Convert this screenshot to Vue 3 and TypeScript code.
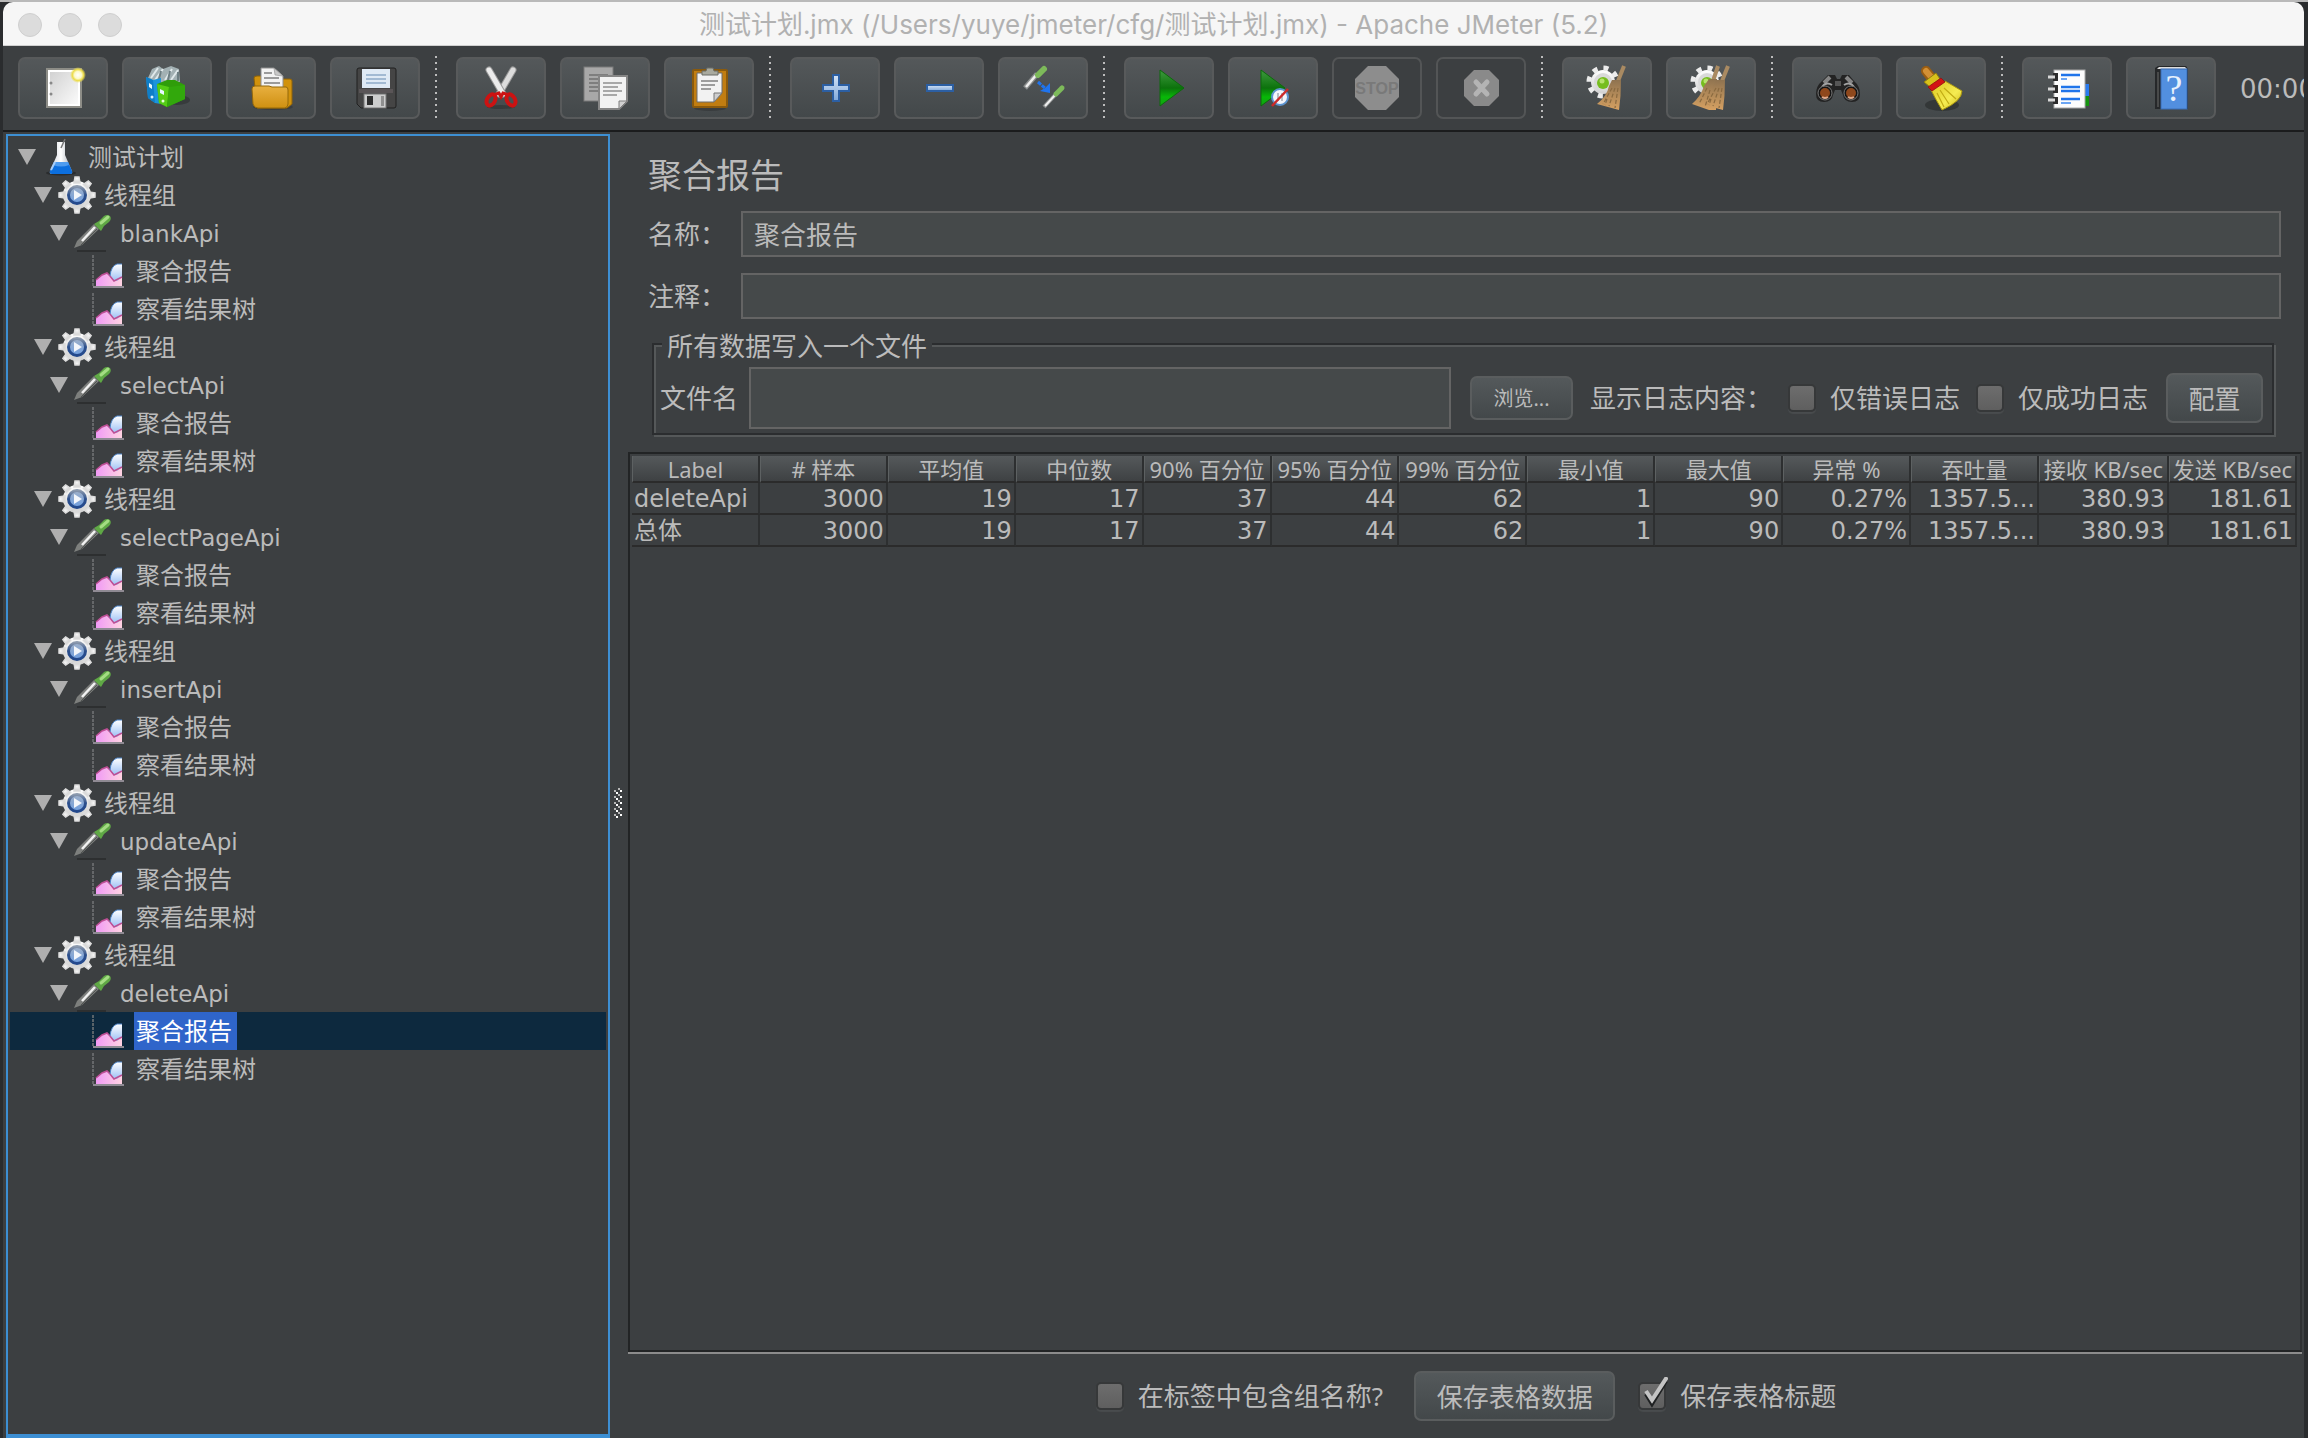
<script setup lang="ts">
import { ref } from 'vue'

type NodeKind = 'plan' | 'group' | 'sampler' | 'report'

interface TreeNode {
  id: number
  level: number
  kind: NodeKind
  label: string
}

interface ToolButton {
  icon: string
  label: string
  disabled?: boolean
}

const toolGroups: ToolButton[][] = [
  [
    { icon: 'new', label: '新建' },
    { icon: 'templates', label: '模板' },
    { icon: 'open', label: '打开' },
    { icon: 'save', label: '保存' },
  ],
  [
    { icon: 'cut', label: '剪切' },
    { icon: 'copy', label: '复制' },
    { icon: 'paste', label: '粘贴' },
  ],
  [
    { icon: 'plus', label: '全部展开' },
    { icon: 'minus', label: '全部折叠' },
    { icon: 'toggle', label: '切换' },
  ],
  [
    { icon: 'start', label: '启动' },
    { icon: 'start-now', label: '不停顿开始' },
    { icon: 'stop', label: '停止', disabled: true },
    { icon: 'shutdown', label: '关闭', disabled: true },
  ],
  [
    { icon: 'clear', label: '清除' },
    { icon: 'clear-all', label: '清除全部' },
  ],
  [
    { icon: 'search', label: '搜索' },
    { icon: 'reset', label: '重置搜索' },
  ],
  [
    { icon: 'functions', label: '函数助手' },
    { icon: 'help', label: '帮助' },
  ],
]

const apis = ['blankApi', 'selectApi', 'selectPageApi', 'insertApi', 'updateApi', 'deleteApi']

const nodes: TreeNode[] = [{ id: 0, level: 0, kind: 'plan', label: '测试计划' }]
for (const api of apis) {
  nodes.push({ id: nodes.length, level: 1, kind: 'group', label: '线程组' })
  nodes.push({ id: nodes.length, level: 2, kind: 'sampler', label: api })
  nodes.push({ id: nodes.length, level: 3, kind: 'report', label: '聚合报告' })
  nodes.push({ id: nodes.length, level: 3, kind: 'report', label: '察看结果树' })
}

const selectedId = ref(nodes.length - 2)
const elementName = ref('聚合报告')
const comment = ref('')
const fileName = ref('')
const errorsOnly = ref(false)
const successOnly = ref(false)
const includeGroup = ref(false)
const saveHeader = ref(true)

const columns = [
  'Label', '# 样本', '平均值', '中位数', '90% 百分位', '95% 百分位', '99% 百分位',
  '最小值', '最大值', '异常 %', '吞吐量', '接收 KB/sec', '发送 KB/sec',
]
const rows = [
  ['deleteApi', '3000', '19', '17', '37', '44', '62', '1', '90', '0.27%', '1357.5...', '380.93', '181.61'],
  ['总体', '3000', '19', '17', '37', '44', '62', '1', '90', '0.27%', '1357.5...', '380.93', '181.61'],
]
</script>

<template>
  <div class="window">
    <svg class="defs" width="0" height="0" aria-hidden="true">
      <defs>
        <linearGradient id="gPaper" x1="0" y1="0" x2="1" y2="1"><stop offset="0" stop-color="#d2d2d2" /><stop offset="1" stop-color="#fafafa" /></linearGradient>
        <linearGradient id="gGreen" x1="0" y1="0" x2="0" y2="1"><stop offset="0" stop-color="#3f9a3f" /><stop offset=".5" stop-color="#0c720c" /><stop offset=".75" stop-color="#08b808" /><stop offset="1" stop-color="#12a012" /></linearGradient>
        <linearGradient id="gFolder" x1="0" y1="0" x2="0" y2="1"><stop offset="0" stop-color="#e8b040" /><stop offset="1" stop-color="#cf9011" /></linearGradient>
        <linearGradient id="gGear" x1="0" y1="0" x2="0" y2="1"><stop offset="0" stop-color="#ffffff" /><stop offset="1" stop-color="#cfcfcf" /></linearGradient>
        <linearGradient id="gPlus" x1="0" y1="0" x2="0" y2="1"><stop offset="0" stop-color="#d5e3f5" /><stop offset="1" stop-color="#7fa8da" /></linearGradient>
        <linearGradient id="gStraw" x1="0" y1="0" x2="0" y2="1"><stop offset="0" stop-color="#8f7350" /><stop offset="1" stop-color="#d6a162" /></linearGradient>
        <linearGradient id="gYellow" x1="0" y1="0" x2="1" y2="1"><stop offset="0" stop-color="#dcc61c" /><stop offset=".6" stop-color="#f5ec52" /><stop offset="1" stop-color="#c9b212" /></linearGradient>
        <linearGradient id="gFlask" x1="0" y1="0" x2="1" y2="0"><stop offset="0" stop-color="#c9ced6" /><stop offset=".5" stop-color="#ffffff" /><stop offset="1" stop-color="#9fa6b0" /></linearGradient>
        <linearGradient id="gPink" x1="0" y1="0" x2="1" y2="0"><stop offset="0" stop-color="#f09af5" /><stop offset="1" stop-color="#ffd3e2" /></linearGradient>
        <linearGradient id="gSky" x1="0" y1="0" x2="0" y2="1"><stop offset="0" stop-color="#ffffff" /><stop offset="1" stop-color="#9cc0f5" /></linearGradient>
        <radialGradient id="gGlow"><stop offset="0" stop-color="#ffffff" /><stop offset=".45" stop-color="#fdf9c8" /><stop offset=".7" stop-color="#ecdc4a" /><stop offset="1" stop-color="#ecdc4a" stop-opacity="0" /></radialGradient>
        <linearGradient id="gRing" x1="0" y1="0" x2="0" y2="1"><stop offset="0" stop-color="#9fb0c8" /><stop offset="1" stop-color="#6f9ee0" /></linearGradient>
        <linearGradient id="gRim" x1="0" y1="0" x2="0" y2="1"><stop offset="0" stop-color="#8b99ad" /><stop offset=".5" stop-color="#2c4f8c" /><stop offset="1" stop-color="#23498d" /></linearGradient>
      </defs>
    </svg>

    <header class="titlebar">
      <div class="lights"><i></i><i></i><i></i></div>
      <h1>测试计划.jmx (/Users/yuye/jmeter/cfg/测试计划.jmx) - Apache JMeter (5.2)</h1>
    </header>

    <div class="toolbar" role="toolbar" aria-label="工具栏">
      <template v-for="(group, g) in toolGroups" :key="g">
        <span v-if="g > 0" class="separator"></span>
        <button v-for="tool in group" :key="tool.icon" class="tool" type="button" :disabled="tool.disabled" :aria-label="tool.label">
          <svg width="44" height="44" viewBox="0 0 44 44" overflow="visible" aria-hidden="true">
            <g v-if="tool.icon === 'new'">
              <rect x="6" y="3" width="34" height="38" fill="#fff" stroke="#8d8d87" stroke-width="2" />
              <rect x="9" y="6" width="28" height="32" fill="url(#gPaper)" />
              <circle cx="10" cy="17" r="1.5" fill="#888" /><circle cx="10" cy="28" r="1.5" fill="#888" />
              <circle cx="37" cy="9" r="8" fill="url(#gGlow)" />
            </g>
            <g v-else-if="tool.icon === 'templates'">
              <ellipse cx="32" cy="34" rx="13" ry="5" fill="#2d3031" opacity=".6" />
              <path d="M3 12L7 3L14 0L18 3L26 0L34 3L35 16L20 18L4 14Z" fill="#a3b1b4" />
              <path d="M6 12L13 2M10 14L18 3M20 14L27 3M26 14L33 4" stroke="#dfe8ea" stroke-width="2" />
              <path d="M14 13L16 5M23 14L25 5M33 15V6" stroke="#6d7e82" stroke-width="2" />
              <path d="M1 11L8 14L16 12V38L10 37L3 32Z" fill="#1c94dc" />
              <path d="M1 11L8 14L10 37L3 32Z" fill="#0f7ec8" />
              <path d="M12 18L22 14L30 14L40 19V33L22 41L14 37Z" fill="#2f9d0a" />
              <path d="M12 18L24 21L22 41L14 37Z" fill="#55cc16" />
              <path d="M24 21L40 19V33L22 41Z" fill="#32a80c" />
              <path d="M4 17L7 19V23L4 21ZM15 23L19 25V29L15 27Z" fill="#e6f7ff" />
              <circle cx="7" cy="31" r="1.5" fill="#d8f0ff" /><circle cx="18" cy="35" r="1.5" fill="#e6ffd8" />
            </g>
            <g v-else-if="tool.icon === 'open'">
              <ellipse cx="24" cy="41" rx="20" ry="3" fill="#2d3031" opacity=".5" />
              <path d="M5 12Q5 10 8 10H18L21 13H41Q43 13 43 15V38L38 42H8Z" fill="#d1920c" stroke="#8f6308" />
              <path d="M12 2H25L34 10V24H12Z" fill="#f3f3f3" stroke="#8f8f8f" />
              <path d="M25 2L26 9L34 10Z" fill="#c8c8c8" stroke="#8f8f8f" stroke-width=".6" />
              <path d="M15 7H23M15 12H30M15 17H31" stroke="#9b9b9b" stroke-width="2" />
              <path d="M3 23Q3 20 6 20H20L23 21H37Q39 21 39 24V38Q39 41 36 42H9Q5 42 4 38Z" fill="url(#gFolder)" stroke="#94680b" />
            </g>
            <g v-else-if="tool.icon === 'save'">
              <path d="M6 2H41Q43 2 43 4V40Q43 42 41 42H8L4 38V4Q4 2 6 2Z" fill="#454545" stroke="#202020" />
              <rect x="9" y="3" width="28" height="19" fill="#dfeaf5" />
              <path d="M13 9H33M13 13H33M13 17H33" stroke="#8fabc8" stroke-width="1.6" />
              <rect x="6" y="23" width="34" height="4" fill="#5a5557" />
              <rect x="11" y="28" width="22" height="14" fill="#cdcdcd" stroke="#777" />
              <rect x="14" y="30" width="6" height="9" fill="#2e2e2e" />
              <rect x="28" y="30" width="3" height="10" fill="#909090" />
            </g>
            <g v-else-if="tool.icon === 'cut'">
              <ellipse cx="22" cy="41" rx="14" ry="2" fill="#2d3031" opacity=".6" />
              <g stroke-linecap="round">
                <path d="M34 4L20 28" stroke="#9a9a9a" stroke-width="7" /><path d="M34 4L20 28" stroke="#dcdcdc" stroke-width="5" />
                <path d="M10 4L24 28" stroke="#9a9a9a" stroke-width="7" /><path d="M10 4L24 28" stroke="#ececec" stroke-width="5" />
              </g>
              <ellipse cx="12" cy="34" rx="4" ry="6" transform="rotate(28 12 34)" fill="#4b4f50" stroke="#cc1212" stroke-width="4" />
              <ellipse cx="32" cy="34" rx="4" ry="6" transform="rotate(-28 32 34)" fill="#4b4f50" stroke="#cc1212" stroke-width="4" />
              <path d="M14 29L20 27L22 31L24 27L30 29" stroke="#cc1212" stroke-width="3" fill="none" />
            </g>
            <g v-else-if="tool.icon === 'copy'">
              <rect x="1" y="1" width="29" height="34" fill="#a8a8a8" stroke="#7b7b7b" />
              <path d="M6 9H25M6 13H25M6 17H25M6 21H25M6 25H20" stroke="#7e7e7e" stroke-width="2" />
              <path d="M16 10H44V35L36 43H16Z" fill="#f2f2f2" stroke="#868686" stroke-width="2" />
              <path d="M36 43V35H44Z" fill="#d0d0d0" stroke="#7e7e7e" />
              <path d="M20 17H39M20 21H35M20 25H39M20 29H34" stroke="#a8a8a8" stroke-width="2" />
            </g>
            <g v-else-if="tool.icon === 'paste'">
              <ellipse cx="23" cy="42" rx="16" ry="3" fill="#2d3031" opacity=".5" />
              <rect x="6" y="4" width="34" height="37" rx="1" fill="#c17d11" stroke="#8a5a0d" stroke-width="2" />
              <path d="M10 7H35V27L27 36H10Z" fill="#f2f2f2" stroke="#6d6d6d" />
              <path d="M27 36V27H35Z" fill="#cfcfcf" stroke="#777" />
              <path d="M14 15H31M14 19H28M14 23H24" stroke="#9d9d9d" stroke-width="2" />
              <path d="M15 9V5H19L20 2H26L27 5H31V9Z" fill="#a9aa9f" stroke="#6b6c66" />
            </g>
            <path v-else-if="tool.icon === 'plus'" d="M20 9H26V19H36V25H26V35H20V25H10V19H20Z" fill="url(#gPlus)" stroke="#2c5fa3" stroke-width="2" />
            <rect v-else-if="tool.icon === 'minus'" x="10" y="19" width="26" height="6" fill="url(#gPlus)" stroke="#2c5fa3" stroke-width="2" />
            <g v-else-if="tool.icon === 'toggle'">
              <path d="M4 22L16 8" stroke="#8b8e8e" stroke-width="5" /><path d="M5 21L16 8" stroke="#efefef" stroke-width="2.5" />
              <path d="M17 9L23 3" stroke="#7dba5a" stroke-width="6" stroke-linecap="round" />
              <path d="M23 41L35 28" stroke="#8b8e8e" stroke-width="4" /><path d="M24 40L35 28" stroke="#efefef" stroke-width="2" />
              <path d="M35 28L41 22" stroke="#7dba5a" stroke-width="5" stroke-linecap="round" />
              <path d="M17 16L25 23" stroke="#1f74ee" stroke-width="3" stroke-dasharray="4 1" />
              <path d="M29 17L29 27L19 25L24 22Z" fill="#1f74ee" />
            </g>
            <path v-else-if="tool.icon === 'start'" d="M13 4L37 22L13 40Z" fill="url(#gGreen)" stroke="#0c6b0c" />
            <g v-else-if="tool.icon === 'start-now'">
              <path d="M10 4L34 22L10 40Z" fill="url(#gGreen)" stroke="#0c6b0c" />
              <circle cx="29" cy="31" r="8" fill="#f3f6fb" stroke="#5b93cf" stroke-width="2" />
              <path d="M27 27V35M31 27V35" stroke="#b9bec6" stroke-width="2" />
              <path d="M21 40L37 23" stroke="#cc2a2a" stroke-width="2.5" />
            </g>
            <g v-else-if="tool.icon === 'stop'">
              <path d="M13 0H31L44 13V31L31 44H13L0 31V13Z" fill="#8d8d8d" />
              <text x="22" y="28" text-anchor="middle" class="stop-text">STOP</text>
            </g>
            <g v-else-if="tool.icon === 'shutdown'">
              <path d="M15 4H30L40 14V30L30 40H15L5 30V14Z" fill="#8a8a8a" />
              <path d="M17 16L28 28M28 16L17 28" stroke="#b4b4b4" stroke-width="5" stroke-linecap="round" />
            </g>
            <g v-else-if="tool.icon === 'clear' || tool.icon === 'clear-all'">
              <circle cx="18" cy="16" r="12" fill="url(#gGear)" />
              <circle cx="18" cy="16" r="14" fill="none" stroke="#ececec" stroke-width="5" stroke-dasharray="5 6" />
              <circle cx="18" cy="16" r="9" fill="#d9d9d9" /><circle cx="18" cy="17" r="6" fill="#76bd1e" /><circle cx="17" cy="15" r="2.5" fill="#b7e36d" />
              <g v-if="tool.icon === 'clear-all'">
                <path d="M29 0L24 15" stroke="#a98a62" stroke-width="4" />
                <path d="M20 13H28L27 44H20L3 38Q12 30 15 20Z" fill="url(#gStraw)" />
              </g>
              <path d="M39 0L33 15" stroke="#a98a62" stroke-width="4" />
              <path d="M27 14H36Q36 30 34 44L12 38Q22 30 24 20Z" fill="url(#gStraw)" />
              <path d="M27 22L18 38M30 22L24 40M33 22L30 42M22 33L20 39" stroke="#8a6a40" stroke-width="1.2" stroke-dasharray="4 2" />
              <path v-if="tool.icon === 'clear-all'" d="M18 22L10 38M21 24L16 41" stroke="#8a6a40" stroke-width="1.2" stroke-dasharray="4 2" />
            </g>
            <g v-else-if="tool.icon === 'search'">
              <path d="M1 28Q1 20 7 15L13 9H20L22 13H25L27 9H34L39 15Q45 20 45 28Q45 36 37 36Q29 36 28 29L26 24H20L18 29Q17 36 9 36Q1 36 1 28Z" fill="#232323" />
              <path d="M9 17L15 11M37 17L31 11" stroke="#858585" stroke-width="4" />
              <path d="M7 21Q11 15 17 19M39 21Q35 15 29 19" stroke="#a2a2a2" stroke-width="2" fill="none" />
              <path d="M20 15H26V20H20Z" fill="#555" />
              <circle cx="10" cy="27" r="7" fill="#151515" stroke="#777" /><circle cx="36" cy="27" r="7" fill="#151515" stroke="#777" />
              <circle cx="10" cy="27" r="5" fill="#8f481c" /><circle cx="36" cy="27" r="5" fill="#8f481c" />
              <path d="M7 31Q10 33 13 31M33 31Q36 33 39 31" stroke="#e0a98a" stroke-width="2" fill="none" />
            </g>
            <g v-else-if="tool.icon === 'reset'">
              <ellipse cx="23" cy="39" rx="17" ry="6" fill="#26292a" opacity=".6" />
              <path d="M7 5L14 14" stroke="#9a5d12" stroke-width="10" stroke-linecap="round" /><path d="M7 5L13 12" stroke="#d39035" stroke-width="6" stroke-linecap="round" />
              <path d="M5 16L17 7L21 13L11 21Z" fill="#d8c21b" stroke="#8f7d10" />
              <path d="M12 24L26 15Q33 19 43 25Q43 35 23 44Q17 34 12 24Z" fill="url(#gYellow)" stroke="#a8950f" />
              <path d="M18 27L25 41M21 24L30 38M25 22L37 33" stroke="#c1ab14" stroke-width="1.2" />
              <path d="M9 21L22 12L26 16L13 25Z" fill="#d31414" stroke="#901010" stroke-width=".8" />
            </g>
            <g v-else-if="tool.icon === 'functions'">
              <path d="M38 18H44V30H38Z" fill="#2b7cf0" /><path d="M38 30H44V40H38Z" fill="#15930f" />
              <rect x="9" y="4" width="31" height="38" fill="#fcfcfc" stroke="#a8a8a8" />
              <path d="M8 7H13V15H8ZM8 19H13V27H8ZM8 31H13V38H8Z" fill="#2c2c2c" />
              <path d="M3 11H10M3 23H10M3 34H10" stroke="#d8d8d8" stroke-width="3" />
              <path d="M16 9H35M16 21H35M16 25H35M16 33H35" stroke="#1f74ea" stroke-width="2.5" />
              <path d="M16 13H22M16 37H26" stroke="#6ba5f3" stroke-width="2" />
            </g>
            <g v-else-if="tool.icon === 'help'">
              <path d="M6 2L9 0H37L39 3V43H6Z" fill="#26282a" /><path d="M8 3L10 1H36L38 3Z" fill="#dcdcdc" />
              <rect x="12" y="3" width="26" height="40" fill="#528fdf" stroke="#3a6fb8" />
              <path d="M9 6V41" stroke="#565656" stroke-width="1.5" />
              <text x="25" y="35" text-anchor="middle" class="help-text">?</text>
            </g>
          </svg>
        </button>
      </template>
      <output class="timer">00:00:00</output>
    </div>

    <div class="workspace">
      <ul class="tree" role="tree" aria-label="测试计划">
        <li
          v-for="node in nodes"
          :key="node.id"
          role="treeitem"
          :aria-level="node.level + 1"
          :aria-selected="node.id === selectedId"
          :class="['node', node.kind, 'level-' + node.level, { selected: node.id === selectedId }]"
          @click="selectedId = node.id"
        >
          <span class="arrow"><svg v-if="node.kind !== 'report'" width="18" height="16" viewBox="0 0 18 16"><path d="M0 0H18L9 16Z" fill="#afafaf" /></svg></span>
          <svg class="node-icon" width="38" height="38" viewBox="0 0 38 38" aria-hidden="true">
            <g v-if="node.kind === 'plan'">
              <ellipse cx="19" cy="35" rx="15" ry="2.5" fill="#2a2c2e" />
              <path d="M15 4H23V17L30 33Q31 36 28 36H10Q7 36 8 33L15 17Z" fill="url(#gFlask)" />
              <path d="M12 24H26L30 33Q31 36 28 36H10Q7 36 8 33Z" fill="#0c6fdf" />
              <path d="M12 24H26L27 27Q19 30 11 27Z" fill="#4e9cf0" />
              <path d="M19 10L23 1" stroke="#777" stroke-width="1.5" />
              <path d="M9 32L13 24" stroke="#a8cdf8" stroke-width="2" />
            </g>
            <g v-else-if="node.kind === 'group'">
              <g fill="url(#gGear)">
                <circle cx="19" cy="19" r="14" />
                <path v-for="a in 8" :key="a" d="M16 7L17 1H21L22 7Z" :transform="`rotate(${a * 45} 19 19)`" stroke="#dcdcdc" stroke-width="1.5" />
              </g>
              <circle cx="19" cy="19" r="8.5" fill="url(#gRing)" stroke="url(#gRim)" stroke-width="3" />
              <path d="M16 14L24 19L16 24Z" fill="#f3f6fb" />
            </g>
            <g v-else-if="node.kind === 'sampler'">
              <path d="M3 37H32" stroke="#2d2f30" stroke-width="2" />
              <path d="M0 34L3 27L20 10L25 15L8 31Z" fill="#7d7f7d" />
              <path d="M8 27L21 13" stroke="#f2f2f2" stroke-width="2.5" />
              <path d="M7 31L23 15" stroke="#525553" stroke-width="1" />
              <path d="M20 10L25 7L30 2Q33 0 36 2Q38 5 35 8L30 12L27 17Z" fill="#5fa845" />
              <path d="M27 9L34 3" stroke="#a4dc83" stroke-width="3" stroke-linecap="round" />
            </g>
            <g v-else>
              <path d="M3 3V35" stroke="#737577" stroke-width="1.5" stroke-dasharray="3 1" />
              <path d="M3 35H34" stroke="#8f8a93" stroke-width="2" />
              <path d="M6 34V28L12 23L17 21L20 24L24 29L32 25V34Z" fill="url(#gPink)" />
              <path d="M20 24Q21 14 27 12H32V25L27 29H24Z" fill="url(#gSky)" />
              <path d="M6 28L12 23L17 21L20 24L24 29L32 25" fill="none" stroke="#bd4f95" stroke-width="1.5" />
              <path d="M20 24Q21 14 27 12H32" fill="none" stroke="#4c84c9" stroke-width="1" />
            </g>
          </svg>
          <span class="label">{{ node.label }}</span>
        </li>
      </ul>

      <div class="splitter" role="separator" aria-orientation="vertical">
        <svg width="8" height="30" viewBox="0 0 8 30" shape-rendering="crispEdges">
          <g v-for="n in 5" :key="n" :transform="`translate(0 ${(n - 1) * 6})`">
            <path d="M0 2h2v2H0zM4 0h2v2H4z" fill="#b5b5b5" />
            <path d="M2 4h2v2H2zM6 2h2v2H6z" fill="#fff" />
          </g>
        </svg>
      </div>

      <main class="panel">
        <h2>聚合报告</h2>
        <div class="field">
          <label for="el-name">名称：</label>
          <input id="el-name" v-model="elementName" type="text" />
        </div>
        <div class="field">
          <label for="el-comment">注释：</label>
          <input id="el-comment" v-model="comment" type="text" />
        </div>

        <fieldset>
          <legend>所有数据写入一个文件</legend>
          <div class="file-row">
            <label for="file-name">文件名</label>
            <input id="file-name" v-model="fileName" type="text" />
            <button class="btn browse" type="button">浏览...</button>
            <span class="log-label">显示日志内容：</span>
            <label class="check"><input v-model="errorsOnly" type="checkbox" />仅错误日志</label>
            <label class="check"><input v-model="successOnly" type="checkbox" />仅成功日志</label>
            <button class="btn configure" type="button">配置</button>
          </div>
        </fieldset>

        <div class="table-pane">
          <table>
            <colgroup>
              <col v-for="(c, i) in columns" :key="c" :class="{ wide: i === 11 }" />
            </colgroup>
            <thead>
              <tr><th v-for="c in columns" :key="c" scope="col">{{ c }}</th></tr>
            </thead>
            <tbody>
              <tr v-for="row in rows" :key="row[0]"><td v-for="(cell, i) in row" :key="i">{{ cell }}</td></tr>
            </tbody>
          </table>
        </div>

        <footer>
          <label class="check"><input v-model="includeGroup" type="checkbox" />在标签中包含组名称?</label>
          <button class="btn save" type="button">保存表格数据</button>
          <label class="check">
            <input v-model="saveHeader" type="checkbox" />
            <svg v-if="saveHeader" class="tick" width="28" height="32" viewBox="0 0 28 32" aria-hidden="true">
              <path d="M6 17L12 27L26 4" fill="none" stroke="#1f2122" stroke-width="4" />
              <path d="M6 14L12 23L27 0" fill="none" stroke="#c4c4c4" stroke-width="4" />
            </svg>保存表格标题
          </label>
        </footer>
      </main>
    </div>
  </div>
</template>

<style>
body {
  margin: 0;
  background: #2a2c2e;
}
</style>

<style scoped>
* {
  box-sizing: border-box;
}
.window {
  display: flex;
  flex-direction: column;
  min-height: 100vh;
  padding: 0 4px 0 3px;
  border-top: 2px solid #b9b9b9;
  color: #bbbbbb;
  font: 26px/32px "Noto Sans", "Noto Sans CJK SC", sans-serif;
}
.defs {
  position: absolute;
}
.titlebar {
  display: flex;
  align-items: center;
  height: 44px;
  padding: 2px 15px 0;
  background: #f6f6f6;
  border-bottom: 1px solid #d0d0d0;
  border-radius: 10px 10px 0 0;
}
.lights {
  display: flex;
  flex: 1;
  gap: 16px;
}
.lights i {
  width: 24px;
  height: 24px;
  background: #dcdcdc;
  border: 1px solid #cfcfcf;
  border-radius: 50%;
}
.titlebar h1 {
  margin: 0;
  color: #b1b1b1;
  font: 400 26px/32px Inter, "Noto Sans CJK SC", sans-serif;
}
.titlebar::after {
  flex: 1;
  content: "";
}
.toolbar {
  display: flex;
  align-items: center;
  gap: 14px;
  height: 86px;
  padding: 0 0 0 15px;
  overflow: hidden;
  background: #3c3f41;
  border-bottom: 2px solid #1b1c1d;
}
.tool {
  display: grid;
  flex: none;
  place-items: center;
  width: 90px;
  height: 62px;
  padding: 0;
  background: linear-gradient(#54585a, #43484a);
  border: 2px solid #585a5b;
  border-radius: 7px;
}
.tool:disabled {
  background: none;
  border-color: #535556;
}
.separator {
  flex: none;
  width: 8px;
  height: 64px;
  background: repeating-linear-gradient(#bcbcbc 0 2px, transparent 2px 6px) 1px 0 / 2px 64px no-repeat;
}
.stop-text {
  fill: #797979;
  font: 700 16px "Liberation Sans Narrow", "Liberation Sans", sans-serif;
}
.help-text {
  fill: #e8f1fc;
  font: 38px "Liberation Serif", serif;
}
.timer {
  flex: none;
  margin-left: 10px;
  padding-top: 2px;
  font: 26px/32px "DejaVu Sans", sans-serif;
}
.workspace {
  display: flex;
  flex: 1;
  padding-left: 3px;
  background: #3c3f41;
}
.tree {
  flex: none;
  width: 604px;
  margin: 2px 0 0;
  padding: 2px;
  border: 2px solid #3d8fd3;
  border-bottom-width: 4px;
  list-style: none;
  font: 24px/35px "DejaVu Sans", "Noto Sans CJK SC", sans-serif;
}
.node {
  display: flex;
  align-items: center;
  gap: 6px;
  height: 38px;
}
.level-0 { padding-left: 8px; }
.level-1 { padding-left: 24px; }
.level-2 { padding-left: 40px; }
.level-3 { padding-left: 56px; }
.sampler {
  font-size: 23px;
}
.selected {
  background: #0d293e;
}
.arrow {
  display: grid;
  flex: none;
  place-items: center;
  width: 18px;
}
.arrow svg,
.node-icon {
  display: block;
}
.label {
  height: 38px;
  padding: 3px 5px 0 2px;
}
.selected .label {
  color: #fff;
  background: #2f65ca;
}
.splitter {
  display: grid;
  flex: none;
  align-items: center;
  width: 18px;
  padding-left: 4px;
}
.splitter svg {
  display: block;
  margin-top: 36px;
}
.panel {
  display: flex;
  flex: 1;
  flex-direction: column;
  min-width: 0;
}
h2 {
  margin: 22px 20px 17px;
  font: 400 34px/40px "Noto Sans CJK SC", sans-serif;
}
.field {
  display: flex;
  align-items: center;
  margin: 0 23px 16px 20px;
}
.field label {
  flex: none;
  width: 93px;
}
input[type="text"] {
  flex: 1;
  min-width: 0;
  height: 46px;
  padding: 0 11px;
  color: inherit;
  background: #45494a;
  border: 2px solid #646464;
  outline: none;
  font: inherit;
}
fieldset {
  min-width: 0;
  margin: -7px 30px 17px 24px;
  padding: 7px 9px 4px 6px;
  border: 2px solid #2b2d2f;
  box-shadow: inset 2px 2px #555859, 2px 2px #555859;
}
legend {
  margin-left: 2px;
  padding: 4px 5px 0;
  background: #3c3f41;
  line-height: 28px;
}
.file-row {
  display: flex;
  align-items: center;
}
.file-row input[type="text"] {
  height: 62px;
  margin: 0 19px 0 11px;
}
.log-label {
  margin: 0 16px 0 17px;
}
.btn {
  flex: none;
  height: 50px;
  padding: 2px 0 0;
  color: inherit;
  background: linear-gradient(#54595b, #43484a);
  border: 2px solid #5a5d5e;
  border-radius: 7px;
  font: inherit;
}
.browse {
  width: 103px;
  height: 44px;
  font-size: 20px;
}
.configure {
  width: 97px;
  margin-left: 2px;
}
.check {
  position: relative;
  display: flex;
  align-items: center;
  margin-right: 16px;
}
.check input {
  flex: none;
  width: 28px;
  height: 28px;
  margin: 0 14px 0 0;
  appearance: none;
  background: linear-gradient(#6d6d6d, #5f5f5f);
  border: 2px solid #363839;
  border-radius: 5px;
  box-shadow: 0 2px 1px #494c4e;
}
.tick {
  position: absolute;
  top: -3px;
  left: 2px;
}
.table-pane {
  flex: 1;
  margin-right: 2px;
  padding: 2px 3px 0 2px;
  border: 2px solid #222425;
  border-right-color: #2e3032;
  box-shadow: 0 2px #8c8c8c;
}
table {
  width: 100%;
  table-layout: fixed;
  border-spacing: 0;
}
.wide {
  width: 130px;
}
th {
  height: 27px;
  padding: 1px 0 0;
  background: linear-gradient(#55595b, #3e4143);
  border-right: 2px solid #2d2f30;
  border-bottom: 2px solid #2b2b2b;
  border-left: 1px solid #5d6162;
  font: 400 22px/24px "Noto Sans", "Noto Sans CJK SC", sans-serif;
  white-space: nowrap;
}
td {
  height: 32px;
  padding: 3px 2px 0;
  border-right: 2px solid #2d2f30;
  border-bottom: 2px solid #2b2b2b;
  font: 24px/27px "DejaVu Sans", "Noto Sans CJK SC", sans-serif;
  text-align: right;
  white-space: nowrap;
}
td:first-child {
  text-align: left;
}
footer {
  display: flex;
  align-items: center;
  justify-content: center;
  height: 86px;
  padding-top: 2px;
}
footer .check:last-child {
  margin-right: 0;
}
.save {
  width: 201px;
  margin: 0 23px 0 15px;
}
</style>
